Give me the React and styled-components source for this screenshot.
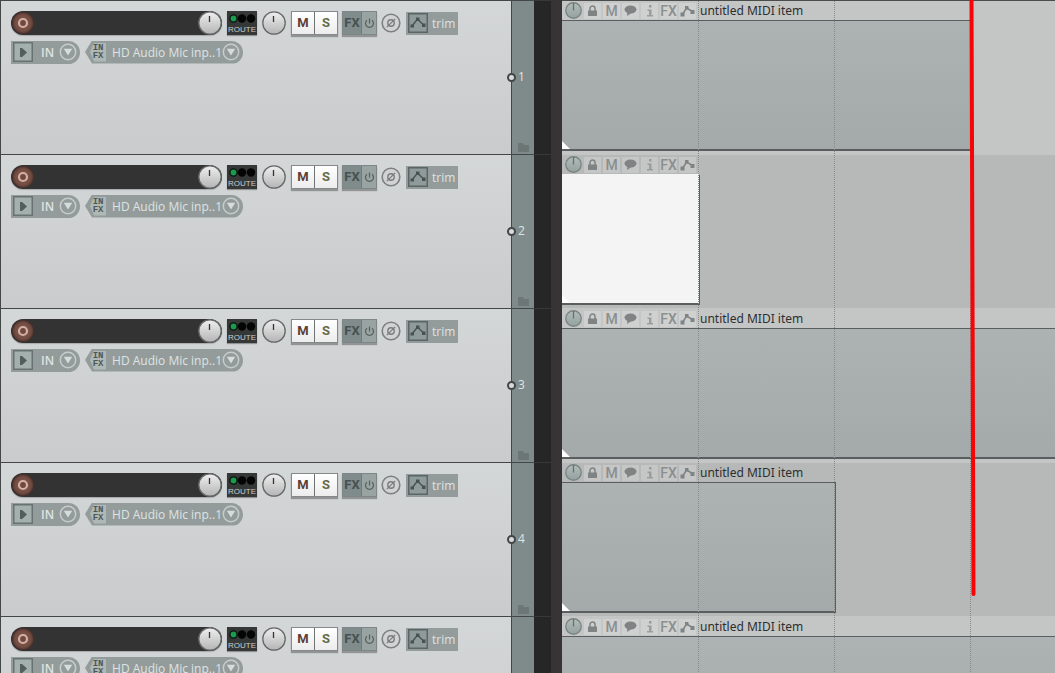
import React from 'react';
import styled, { createGlobalStyle, css } from 'styled-components';

const GlobalStyle = createGlobalStyle`
* {
  box-sizing: border-box;
}
body {
  margin: 0;
  background: #262626;
  font-family: 'Open Sans', 'Noto Sans', sans-serif;
}
button {
  font-family: inherit;
  margin: 0;
  padding: 0;
  border: none;
  outline: none;
  background: none;
  cursor: pointer;
}
svg {
  display: block;
}
`;

const Window = styled.main`
display: flex;
height: 100vh;
overflow: hidden;
`;

const TrackList = styled.section`
flex: none;
width: 551px;
`;

const Track = styled.article`
display: flex;
height: 154px;
`;

const TrackPanel = styled.div`
width: 512px;
padding: 10px 0 0 10px;
border: solid #434747;
border-width: 1px 1px 0 1px;
background: linear-gradient(#d4d7d8, #c9cbcc);
`;

const ControlRow = styled.div`
display: flex;
align-items: center;
height: 24px;
margin-bottom: 5px;
`;

const VolumeSlot = styled.div`
display: flex;
justify-content: space-between;
width: 211px;
height: 24px;
border-radius: 12px;
background: #333333;
box-shadow: 0 1px 1px rgba(0, 0, 0, 0.2);
`;

const IconButton = styled.button`
flex: none;
display: flex;
align-items: center;
justify-content: center;
width: ${props => props.$width || 24}px;
height: 24px;
`;

const RouteButton = styled.button`
width: 30px;
height: 24px;
margin-left: 5px;
background: #363838;
color: #c9cccc;
font-family: 'Liberation Sans', Arial, sans-serif;
font-size: 8px;
line-height: 10px;
box-shadow: 0 1px 1px rgba(0, 0, 0, 0.3);
`;

const PanButton = styled(IconButton)`
margin: 0 5px;
`;

const ButtonGroup = styled.div`
display: flex;
height: 24px;
margin-right: 4px;
border: 1px solid ${props => props.$edge};
box-shadow: 0 2px 1px rgba(0, 0, 0, 0.3);
`;

const MuteSoloButton = styled.button`
width: 22px;
background: linear-gradient(#ffffff, #ececec);
color: ${props => props.$color};
font-family: Roboto, sans-serif;
font-size: 13px;
font-weight: 700;
line-height: 22px;

& + & {
  width: 23px;
  border-left: 1px solid #6f7373;
}
`;

const FxButton = styled.button`
display: flex;
align-items: center;
justify-content: center;
width: ${props => props.$width}px;
background: ${props => props.$background};
color: #465150;
font-family: Roboto, sans-serif;
font-size: 13px;
font-weight: 700;
line-height: 22px;

& + & {
  border-left: 1px solid #6f7c7b;
}
`;

const TrimButton = styled.button`
display: flex;
align-items: center;
gap: 4px;
width: 52px;
height: 23px;
margin-left: 5px;
padding-left: 2px;
background: #939c9b;
color: #dfe3e3;
font-size: 12px;
`;

const InputPill = styled.div`
display: flex;
align-items: center;
width: 69px;
height: 23px;
padding-right: 3px;
border-radius: 0 12px 12px 0;
background: #939c9b;
color: #dfe3e3;
font-size: 12px;
`;

const InputLabel = styled.span`
flex: 1;
padding-left: 7px;
font-weight: 600;
`;

const SourcePill = styled(InputPill)`
width: 158px;
margin-left: 5px;
padding-left: 5px;
clip-path: polygon(0 50%, 7px 0, 100% 0, 100% 100%, 7px 100%);
`;

const SourceLabel = styled.span`
flex: 1;
padding-left: 6px;
white-space: nowrap;
`;

const InputFxButton = styled.button`
display: flex;
flex-direction: column;
align-items: center;
justify-content: center;
width: 17px;
height: 19px;
background: #aeb8b6;
color: #4f5755;
font-family: 'Liberation Mono', monospace;
font-size: 9px;
font-weight: 700;
line-height: 8px;
clip-path: polygon(0 50%, 4px 0, 100% 0, 100% 100%, 4px 100%);
`;

const TrackStrip = styled.div`
display: flex;
flex-direction: column;
justify-content: flex-end;
align-items: center;
position: relative;
width: 22px;
padding-bottom: 2px;
border-top: 1px solid #434747;
background: #7f8b8b;
`;

const TrackMeter = styled.div`
flex: 1;
border-top: 1px solid #383838;
background: #262626;
`;

const TrackNumber = styled.span`
position: absolute;
top: 68px;
left: 6px;
color: #dfe3e3;
font-size: 12px;
line-height: 16px;
`;

const VolumePin = styled.i`
position: absolute;
top: 72px;
left: -5px;
width: 9px;
height: 9px;
border: 2px solid #414646;
border-radius: 50%;
background: #d6dada;
`;

const Splitter = styled.div`
flex: none;
width: 11px;
border-right: 1px solid #6b1c1c;
background: #363434;
`;

const Arrange = styled.section`
flex: 1;
position: relative;
min-width: 0;
overflow: hidden;
`;

const Lane = styled.div`
height: 154px;
border-top: 1px solid ${props => (props.$first ? '#4b4d4d' : '#c4c6c5')};
background: ${props => (props.$odd ? '#c4c6c5' : '#b7b9b8')};
`;

const Item = styled.div`
width: ${props => (props.$beats ? `${props.$beats * 136 + 2}px` : '100%')};
`;

const ItemHeader = styled.div`
display: flex;
align-items: center;
gap: 2px;
height: 19px;
padding-left: 2px;
color: #2c2f2f;
font-size: 12px;
white-space: nowrap;
`;

const ItemButton = styled.button`
display: flex;
align-items: center;
justify-content: center;
flex: none;
width: 17px;
height: 16px;
background: rgba(255, 255, 255, 0.2);
color: #8b8e8e;
font-family: Roboto, sans-serif;
font-size: 14px;
font-weight: 500;
line-height: 16px;
`;

const KnobButton = styled(ItemButton)`
width: 18px;
background: none;
`;

const ItemName = styled.span`
padding-left: 2px;
font-family: 'Noto Sans', sans-serif;
`;

const ItemBody = styled.div`
position: relative;
height: 131px;
border: solid #5a5e5e;
border-width: 1px ${props => (props.$open ? 0 : 1)}px 2px 0;
background: linear-gradient(#adb2b2, #a4a9a9);
${props => props.$selected && css`
  border-top-color: #f4f4f4;
  background: #f4f4f4;
`}

&::after {
  content: '';
  position: absolute;
  left: 0;
  bottom: 0;
  width: 8px;
  height: 8px;
  background: #ffffff;
  clip-path: polygon(0 0, 100% 100%, 0 100%);
}
`;

const GridLine = styled.i`
position: absolute;
top: 1px;
bottom: 0;
left: ${props => props.$beat * 136}px;
width: 1px;
background: repeating-linear-gradient(#868a8a 0 1px, transparent 1px 2px);
`;

const Marker = styled.svg`
position: absolute;
top: 0;
left: 406px;
`;

const RecordIcon = () => (
  <svg width="24" height="24" viewBox="0 0 24 24">
    <defs>
      <radialGradient id="rec">
        <stop offset="0" stopColor="#8a6257" />
        <stop offset="0.75" stopColor="#714a40" />
        <stop offset="1" stopColor="#4a332e" />
      </radialGradient>
    </defs>
    <circle cx="12" cy="12" r="11" fill="url(#rec)" stroke="#40302c" />
    <circle cx="12" cy="12" r="4" fill="#70483e" stroke="#d3b0a4" strokeWidth="2.2" />
  </svg>
);

const KnobIcon = () => (
  <svg width="24" height="24" viewBox="0 0 24 24">
    <defs>
      <linearGradient id="knob" x2="0" y2="1">
        <stop offset="0" stopColor="#efefef" />
        <stop offset="1" stopColor="#b4b4b4" />
      </linearGradient>
    </defs>
    <circle cx="12" cy="12" r="11.2" fill="url(#knob)" stroke="#666969" strokeWidth="1.3" />
    <path d="M11.5 5v6" stroke="#333" strokeWidth="1.3" />
  </svg>
);

const RouteLights = () => (
  <svg width="30" height="13" viewBox="0 0 30 13">
    <circle cx="6.5" cy="6.5" r="3.6" fill="#1c9a50" stroke="#07170d" strokeWidth="1.4" />
    <circle cx="15" cy="6.5" r="4.2" fill="#050505" />
    <circle cx="24" cy="6.5" r="4.2" fill="#050505" />
  </svg>
);

const PowerIcon = () => (
  <svg width="11" height="11" viewBox="0 0 11 11" fill="none" stroke="#56605f" strokeWidth="1.2">
    <path d="M3 2.2a4 4 0 1 0 5 0M5.5 0.5v5" />
  </svg>
);

const PhaseIcon = () => (
  <svg width="20" height="20" viewBox="0 0 20 20" fill="none">
    <circle cx="10" cy="10" r="8.8" fill="#d2d4d4" stroke="#7c8181" strokeWidth="1.6" />
    <circle cx="10" cy="10" r="3.2" stroke="#777c7c" strokeWidth="1.4" />
    <path d="M5.8 14.200l8.400-8.400" stroke="#777c7c" strokeWidth="1.2" />
  </svg>
);

const EnvelopeBox = () => (
  <svg width="20" height="20" viewBox="0 0 20 20">
    <rect x="0.75" y="0.75" width="18.5" height="18.5" fill="#8f9b9a" stroke="#5b6564" strokeWidth="1.5" />
    <path d="M4 13l5.500-7 6 6" fill="none" stroke="#485251" strokeWidth="1.4" />
    <path d="M2.500 11.500h3.500v3h-3.500zM8 4.500h3.500v3.500H8zM14 10.500h3.500v3.500h-3.500z" fill="#485251" />
  </svg>
);

const MonitorIcon = () => (
  <svg width="23" height="23" viewBox="0 0 23 23">
    <rect x="2.75" y="1.75" width="18.5" height="18.5" fill="#a3b0ae" stroke="#687371" strokeWidth="1.5" />
    <path d="M8.500 8h3l4-1v9l-4-1h-3z" fill="none" />
    <path d="M9 7h2l5 4.500-5 4.500H9z" fill="#535d5b" />
  </svg>
);

const DropIcon = () => (
  <svg width="18" height="18" viewBox="0 0 18 18">
    <circle cx="9" cy="9" r="7.700" fill="none" stroke="#c7cccb" strokeWidth="1.500" />
    <path d="M4.800 5.800h8.400L9 12.500z" fill="#d7dbda" />
  </svg>
);

const FolderIcon = () => (
  <svg width="11" height="9" viewBox="0 0 11 9" fill="#6b7675">
    <path d="M0 0h5l1 2h5v7H0z" />
  </svg>
);

const ItemKnobIcon = () => (
  <svg width="17" height="17" viewBox="0 0 17 17">
    <defs>
      <linearGradient id="itemKnob" x2="0" y2="1">
        <stop offset="0" stopColor="#b3bdbb" />
        <stop offset="1" stopColor="#93a19f" />
      </linearGradient>
    </defs>
    <circle cx="8.500" cy="8.500" r="7.700" fill="url(#itemKnob)" stroke="#7b8584" strokeWidth="1.400" />
    <path d="M8.500 1v7.500" stroke="#65706f" strokeWidth="1.300" />
  </svg>
);

const LockIcon = () => (
  <svg width="11" height="12" viewBox="0 0 11 12">
    <path d="M1 5.500h9V11H1z" fill="#808383" />
    <path d="M3 6V3.500a2.500 2.500 0 0 1 5 0V6" fill="none" stroke="#808383" strokeWidth="1.500" />
  </svg>
);

const NoteIcon = () => (
  <svg width="13" height="11" viewBox="0 0 13 11" fill="#808383">
    <ellipse cx="6.500" cy="4.500" rx="6" ry="4" />
    <path d="M3.500 7l-.5 4 4.500-3z" />
  </svg>
);

const InfoIcon = () => (
  <svg width="8" height="12" viewBox="0 0 8 12" fill="#9a9d9d">
    <path d="M3 0h2.500v2.500H3zM1.500 4.500h4V10H7v1.500H1V10h2V6H1.500z" />
  </svg>
);

const EnvelopeIcon = () => (
  <svg width="15" height="12" viewBox="0 0 15 12">
    <path d="M2.500 9.500l4-6.500 6 3.500" fill="none" stroke="#808383" strokeWidth="1.500" />
    <path d="M.5 7.500h4v4h-4zM5 1h3.500v3.500H5zM10.500 5h4v4h-4z" fill="#808383" />
  </svg>
);

const tracks = [
  { number: 1, name: 'untitled MIDI item', beats: 3 },
  { number: 2, beats: 1, selected: true },
  { number: 3, name: 'untitled MIDI item' },
  { number: 4, name: 'untitled MIDI item', beats: 2 },
  { number: 5, name: 'untitled MIDI item' },
];

const TrackRow = ({track}) => (
  <Track>
    <TrackPanel>
      <ControlRow>
        <VolumeSlot>
          <IconButton aria-label="Record arm"><RecordIcon /></IconButton>
          <IconButton aria-label="Volume"><KnobIcon /></IconButton>
        </VolumeSlot>
        <RouteButton><RouteLights />ROUTE</RouteButton>
        <PanButton aria-label="Pan"><KnobIcon /></PanButton>
        <ButtonGroup $edge="#858989">
          <MuteSoloButton $color="#5b4038">M</MuteSoloButton>
          <MuteSoloButton $color="#676b48">S</MuteSoloButton>
        </ButtonGroup>
        <ButtonGroup $edge="#7d8786">
          <FxButton $width={18} $background="#7f8c8b">FX</FxButton>
          <FxButton $width={15} $background="#98a3a2" aria-label="Bypass effects"><PowerIcon /></FxButton>
        </ButtonGroup>
        <IconButton $width={20} aria-label="Phase"><PhaseIcon /></IconButton>
        <TrimButton><EnvelopeBox />trim</TrimButton>
      </ControlRow>
      <ControlRow>
        <InputPill>
          <IconButton $width={23} aria-label="Monitor"><MonitorIcon /></IconButton>
          <InputLabel>IN</InputLabel>
          <IconButton $width={18} aria-label="Input menu"><DropIcon /></IconButton>
        </InputPill>
        <SourcePill>
          <InputFxButton><span>IN</span><span>FX</span></InputFxButton>
          <SourceLabel>HD Audio Mic inp..1</SourceLabel>
          <IconButton $width={18} aria-label="Source menu"><DropIcon /></IconButton>
        </SourcePill>
      </ControlRow>
    </TrackPanel>
    <TrackStrip>
      <VolumePin />
      {track.number < 5 && <TrackNumber>{track.number}</TrackNumber>}
      <FolderIcon />
    </TrackStrip>
    <TrackMeter />
  </Track>
)

const MidiItem = ({track}) => (
  <Item $beats={track.beats}>
    <ItemHeader>
      <KnobButton aria-label="Item volume"><ItemKnobIcon /></KnobButton>
      <ItemButton aria-label="Lock"><LockIcon /></ItemButton>
      <ItemButton>M</ItemButton>
      <ItemButton aria-label="Notes"><NoteIcon /></ItemButton>
      <ItemButton aria-label="Properties"><InfoIcon /></ItemButton>
      <ItemButton>FX</ItemButton>
      <ItemButton aria-label="Envelopes"><EnvelopeIcon /></ItemButton>
      {track.name && <ItemName>{track.name}</ItemName>}
    </ItemHeader>
    <ItemBody $selected={track.selected} $open={!track.beats} />
  </Item>
)

const App = () => (
  <Window>
    <GlobalStyle />
    <TrackList>
      {tracks.map(track => <TrackRow key={track.number} track={track} />)}
    </TrackList>
    <Splitter />
    <Arrange>
      {tracks.map((track, index) => (
        <Lane key={track.number} $first={index === 0} $odd={index % 2 === 0}>
          <MidiItem track={track} />
        </Lane>
      ))}
      <GridLine $beat={1} />
      <GridLine $beat={2} />
      <GridLine $beat={3} />
      <Marker width="10" height="600" viewBox="0 0 10 600">
        <path d="M3.500 0C4 200 4.500 400 5.500 594" fill="none" stroke="#f50505" strokeWidth="4" strokeLinecap="round" />
      </Marker>
    </Arrange>
  </Window>
)

export default App;
